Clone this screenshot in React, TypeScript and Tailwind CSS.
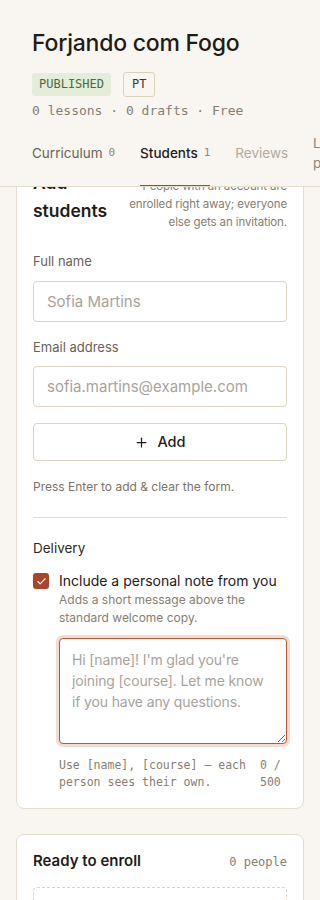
import { Plus, Check } from "lucide-react";

const sans = "font-['Inter','Noto_Sans',sans-serif]";
const mono = "font-['DejaVu_Sans_Mono','Liberation_Mono',monospace]";

function Tab({ label, count, active, muted }: { label: string; count?: number; active?: boolean; muted?: boolean }) {
  return (
    <div
      className={`flex shrink-0 items-center gap-[6px] whitespace-nowrap border-b-2 pb-[12px] -mb-px ${
        active ? "border-[#a8462a]" : "border-transparent"
      }`}
    >
      <span
        className={`text-[13.5px] ${
          active ? "font-medium text-[#24201b]" : muted ? "text-[#b3aa9c]" : "text-[#6b6357]"
        }`}
      >
        {label}
      </span>
      {count !== undefined && <span className={`${mono} text-[11px] text-[#8f8677]`}>{count}</span>}
    </div>
  );
}

export default function App() {
  return (
    <div className={`${sans} min-h-screen bg-[#f9f6f1] text-[#24201b]`}>
      {/* sticky course header */}
      <header className="sticky top-0 z-10 bg-[#f9f6f1] border-b border-[#e4dccd] pl-8 pt-[26px]">
        <h1 className="text-[23px] font-medium leading-[34px] tracking-[-0.01em] text-[#1f1c18]">Forjando com Fogo</h1>
        <div className="mt-[12px] flex items-center gap-3">
          <span className={`${mono} rounded-[3px] bg-[#e3edda] px-[7px] py-[4px] text-[12px] leading-[15px] text-[#4c6b3d]`}>
            PUBLISHED
          </span>
          <span className={`${mono} rounded-[3px] border border-[#dcd1bd] px-[8px] py-[4px] text-[12px] leading-[15px] text-[#3d372f]`}>
            PT
          </span>
        </div>
        <p className={`${mono} mt-[5px] text-[13px] leading-[18px] text-[#877e70]`}>0 lessons · 0 drafts · Free</p>
        <nav className="mt-[13px] flex gap-[25px] overflow-hidden">
          <Tab label="Curriculum" count={0} />
          <Tab label="Students" count={1} active />
          <Tab label="Reviews" muted />
          <div className="flex shrink-0 items-center border-b-2 border-transparent pb-[12px] -mb-px">
            <span className="w-[40px] text-[13.5px] leading-[20px] text-[#8f8677]">Landing page</span>
          </div>
        </nav>
      </header>

      <main className="-mt-[37px] flex flex-col gap-[25px] px-4 pb-10">
        {/* add students card */}
        <section className="rounded-lg border border-[#e4dccd] bg-white px-4 pt-[18px] pb-[17px]">
          <div className="flex items-start gap-3">
            <h2 className="shrink-0 text-[17.5px] font-semibold leading-[28px] text-[#1f1c18]">
              Add
              <br />
              students
            </h2>
            <p className="mt-[8px] min-w-0 flex-1 text-right text-[11.5px] leading-[18px] tracking-[-0.01em] text-[#877e70]">
              People with an account are enrolled right away; everyone else gets an invitation.
            </p>
          </div>

          <label className="mt-[21px] block text-[13px] text-[#6b6254]">Full name</label>
          <input
            className="mt-[9px] block h-[41px] w-full rounded-[4px] border border-[#ddd3c1] bg-white px-[13px] text-[15px] outline-none placeholder:text-[#a9a39a]"
            placeholder="Sofia Martins"
          />

          <label className="mt-[16px] block text-[13px] text-[#6b6254]">Email address</label>
          <input
            className="mt-[9px] block h-[41px] w-full rounded-[4px] border border-[#ddd3c1] bg-white px-[13px] text-[15px] outline-none placeholder:text-[#a9a39a]"
            placeholder="sofia.martins@example.com"
          />

          <button className="mt-[16px] flex h-[38px] w-full items-center justify-center gap-2 rounded-[4px] border border-[#ddd3c1] bg-white text-[14.5px] font-medium text-[#24201b]">
            <Plus size={15} strokeWidth={2} />
            Add
          </button>
          <p className="mt-[17px] text-[12px] text-[#7d7466]">Press Enter to add &amp; clear the form.</p>

          <div className="mt-[21px] border-t border-[#e4dccd]" />

          <p className="mt-[20px] text-[13.5px] text-[#2f2a24]">Delivery</p>
          <div className="mt-[13px] flex items-start gap-[10px]">
            <span className="mt-[2px] flex h-4 w-4 shrink-0 items-center justify-center rounded-[3px] bg-[#a8462a]">
              <Check size={11} strokeWidth={2.5} className="text-white" />
            </span>
            <div className="flex-1">
              <p className="text-[14px] leading-[20px] text-[#24201b]">Include a personal note from you</p>
              <p className="text-[12px] leading-[18px] text-[#877e70]">Adds a short message above the standard welcome copy.</p>
              <textarea
                className="mt-[11px] block h-[106px] w-full rounded-[4px] border border-[#c0552f] bg-white px-[12px] py-[10px] text-[14px] leading-[21px] tracking-[-0.01em] outline-none ring-[3px] ring-[#f1ddd3] placeholder:text-[#a9a39a]"
                placeholder="Hi [name]! I'm glad you're joining [course]. Let me know if you have any questions."
              />
              <div className={`${mono} mt-[13px] flex justify-between gap-3 pr-[5px] text-[11.5px] leading-[17px] text-[#877e70]`}>
                <span>Use [name], [course] — each person sees their own.</span>
                <span className="w-[22px] shrink-0">0 / 500</span>
              </div>
            </div>
          </div>
        </section>

        {/* ready to enroll card */}
        <section className="rounded-lg border border-[#e4dccd] bg-white px-4 pt-[15px] pb-6">
          <div className="flex items-center justify-between">
            <h3 className="text-[15px] font-semibold text-[#1f1c18]">Ready to enroll</h3>
            <span className={`${mono} text-[12px] text-[#877e70]`}>0 people</span>
          </div>
          <div className="mt-[14px] h-[80px] rounded-[4px] border border-dashed border-[#ddd3c1]" />
        </section>
      </main>
    </div>
  );
}
